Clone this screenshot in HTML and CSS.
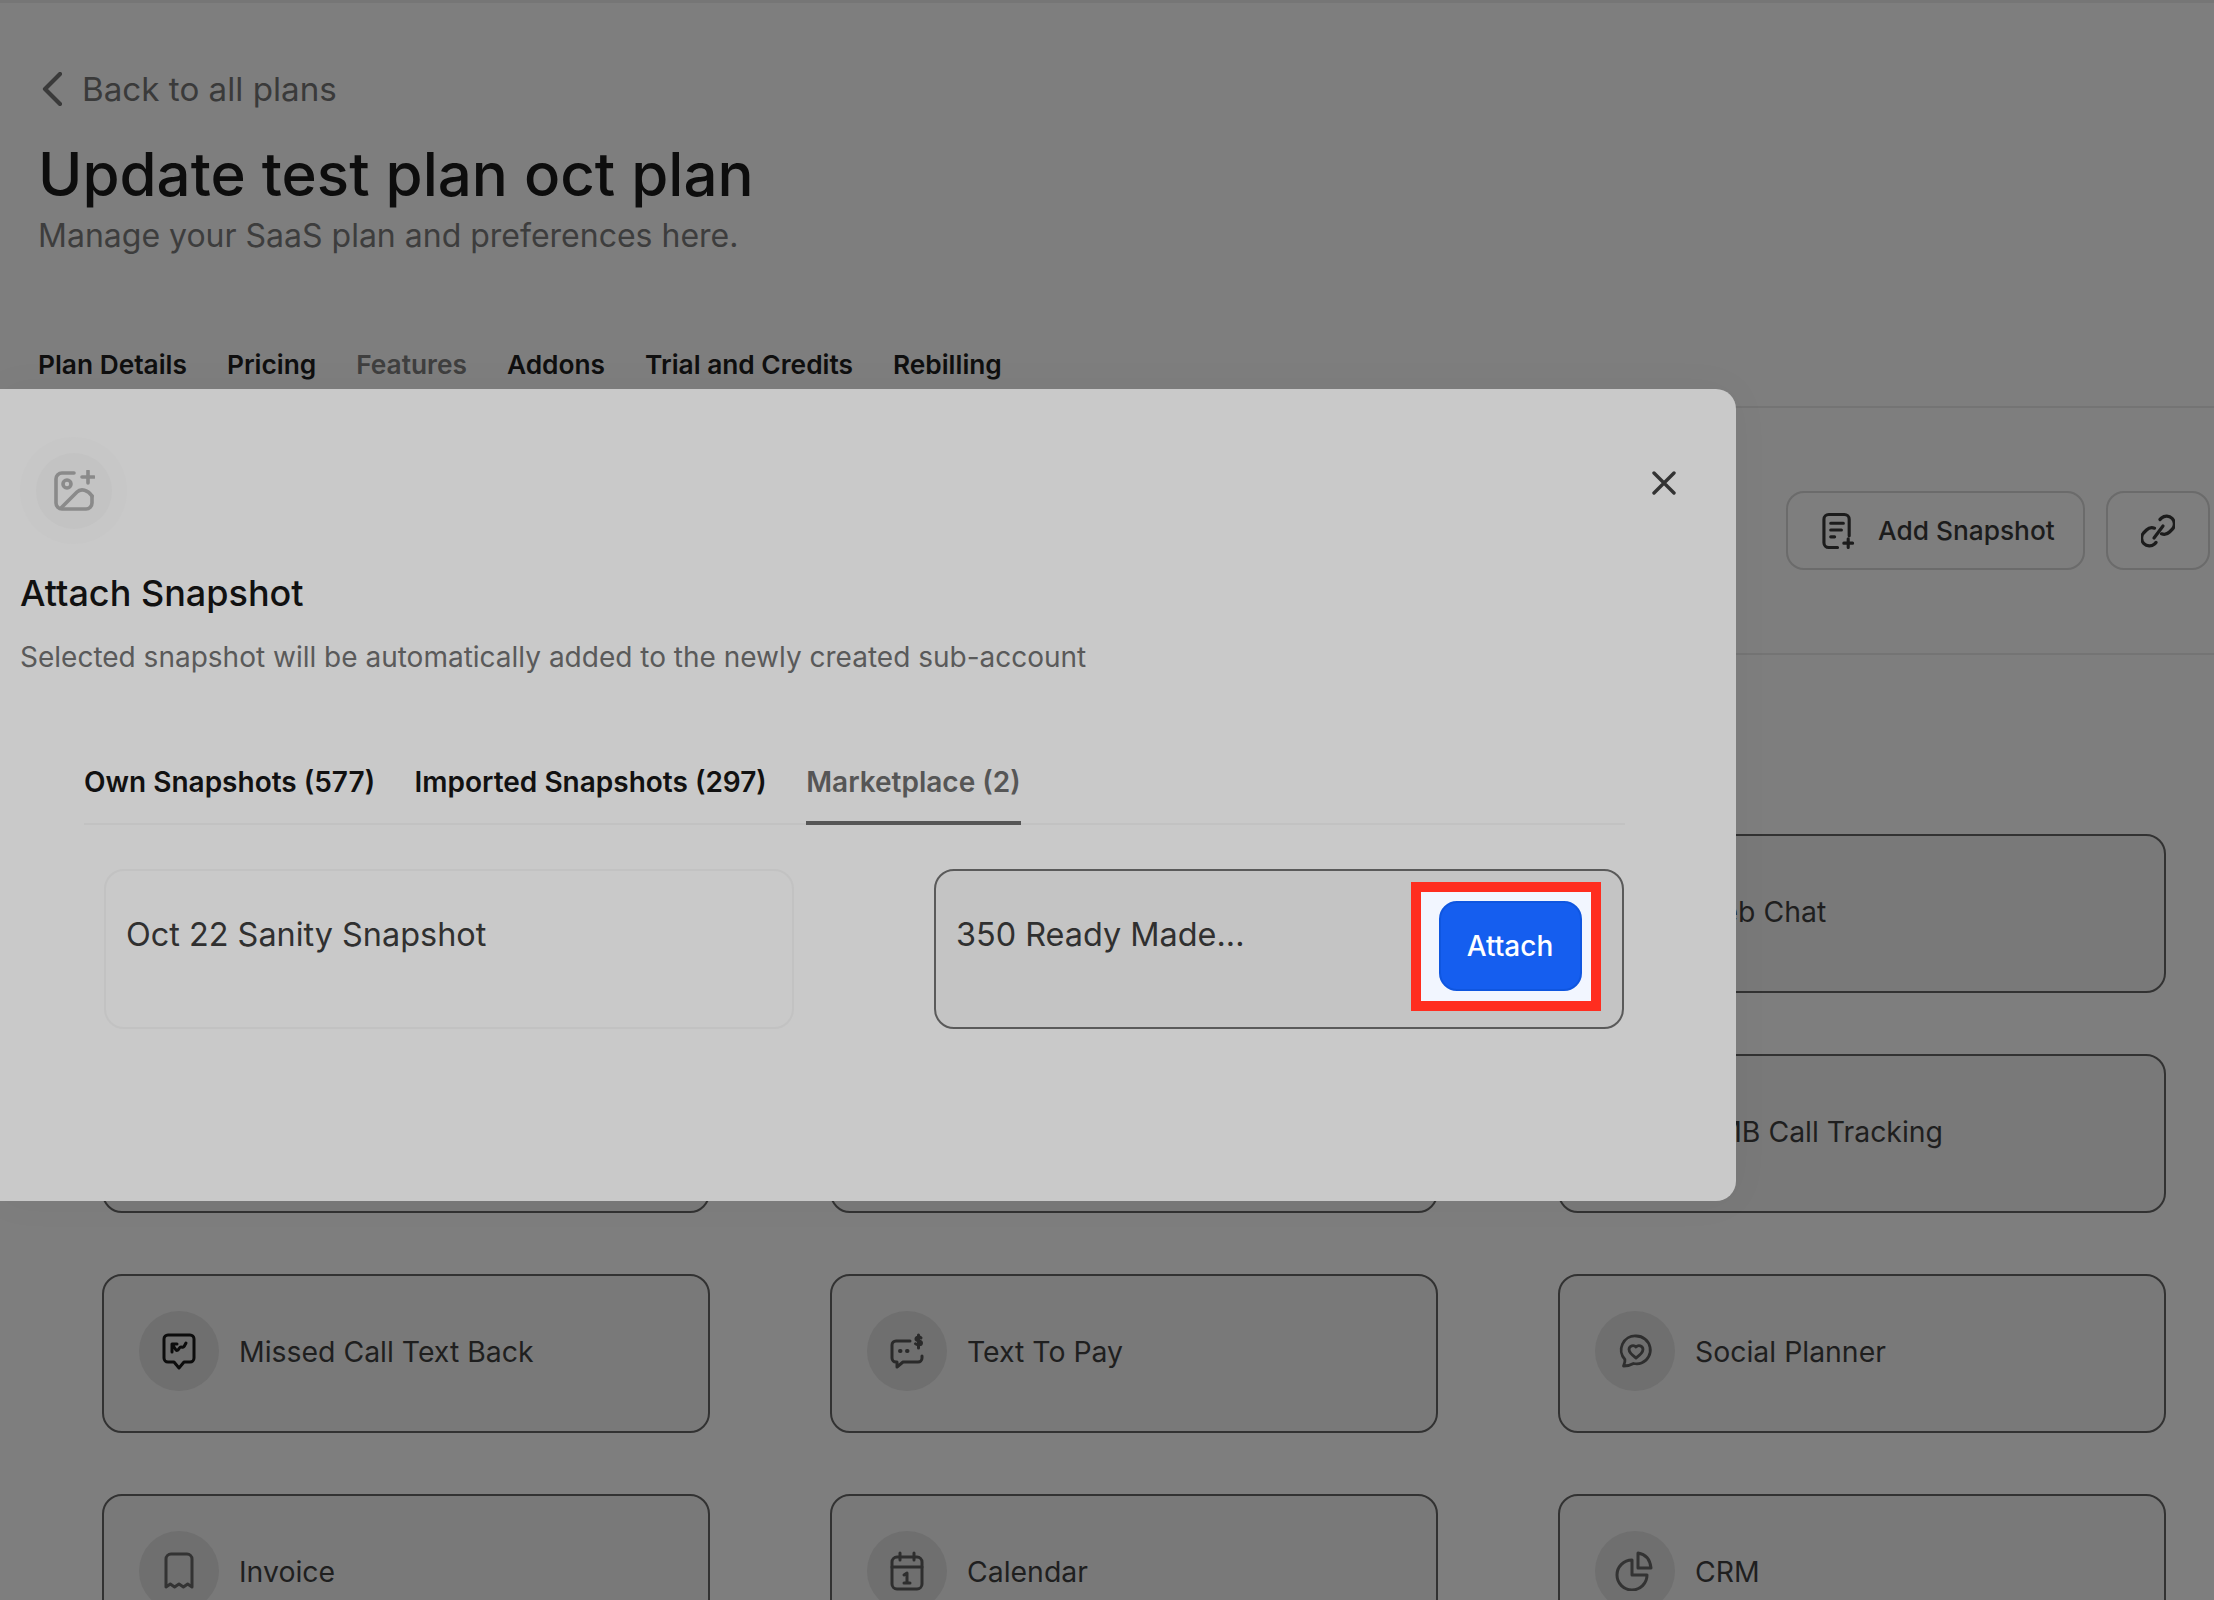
FILE: index.html
```html
<!DOCTYPE html>
<html lang="en">
<head>
<meta charset="utf-8">
<title>Update test plan oct plan</title>
<link rel="stylesheet" href="styles.css">
</head>
<body>
<main class="page">
  <header class="head">
    <a class="back">
      <svg class="back-icon" viewBox="0 0 20 34" fill="none" stroke="currentColor" stroke-width="4.200" stroke-linecap="round" stroke-linejoin="round"><path d="M18 2 3 17l15 15"/></svg>
      <span>Back to all plans</span>
    </a>
    <h1 class="title">Update test plan oct plan</h1>
    <p class="subtitle">Manage your SaaS plan and preferences here.</p>
    <nav class="page-tabs">
      <span class="page-tab">Plan Details</span>
      <span class="page-tab">Pricing</span>
      <span class="page-tab page-tab-active">Features</span>
      <span class="page-tab">Addons</span>
      <span class="page-tab">Trial and Credits</span>
      <span class="page-tab">Rebilling</span>
    </nav>
  </header>

  <section class="toolbar">
    <button class="tool-btn">
      <svg class="tool-icon-doc" viewBox="0 0 34 38" fill="none" stroke="currentColor" stroke-width="3.200" stroke-linecap="round" stroke-linejoin="round"><path d="M16 36H7a5 5 0 0 1-5-5V7a5 5 0 0 1 5-5h16a5 5 0 0 1 5 5v17"/><path d="M9 11h13M9 18h11M9 25h4M27 27v9M22.500 31.500h9"/></svg>
      <span>Add Snapshot</span>
    </button>
    <button class="tool-btn tool-btn-icon">
      <svg class="tool-icon-link" viewBox="0 0 34 34" fill="none" stroke="currentColor" stroke-width="3.200" stroke-linecap="round" stroke-linejoin="round"><path d="M19 5.500l1.500-1.500a7.800 7.800 0 0 1 11 11l-3 3a7.800 7.800 0 0 1-8 1.800"/><path d="M13 24 22 12"/><path d="M15 28.500 13.500 30a7.800 7.800 0 0 1-11-11l3-3a7.800 7.800 0 0 1 8-1.800"/></svg>
    </button>
  </section>

  <section class="grid">
    <div class="card"></div>
    <div class="card"></div>
    <div class="card"><span class="card-icon"></span><span class="card-label">Web Chat</span></div>
    <div class="card"></div>
    <div class="card"></div>
    <div class="card"><span class="card-icon"></span><span class="card-label">GMB Call Tracking</span></div>

    <div class="card">
      <span class="card-icon"><svg viewBox="0 0 40 40" fill="none" stroke="#0c0c0c" stroke-width="3" stroke-linecap="round" stroke-linejoin="round"><path d="M9 4h22a4 4 0 0 1 4 4v19a4 4 0 0 1-4 4h-6l-5 6-5-6H9a4 4 0 0 1-4-4V8a4 4 0 0 1 4-4Z"/><path d="M13 21v-8h5M13 13l4 6c2 2 3-3 5-3s2 2 5-4"/></svg></span>
      <span class="card-label">Missed Call Text Back</span>
    </div>
    <div class="card">
      <span class="card-icon"><svg viewBox="0 0 40 40" fill="none" stroke="#2a2a2a" stroke-width="3" stroke-linecap="round" stroke-linejoin="round"><path d="M23 10H9a4 4 0 0 0-4 4v13a4 4 0 0 0 4 4h1v5l6-5h15a4 4 0 0 0 4-4v-2"/><path d="M13 20h.5M20 20h.5" stroke-width="4"/><path d="M34 7c-1-1.300-5-1.300-5 1 0 2.600 5.500 1.300 5.500 3.900 0 2.400-4.500 2.400-6 .9M31.500 4v13"/></svg></span>
      <span class="card-label">Text To Pay</span>
    </div>
    <div class="card">
      <span class="card-icon"><svg viewBox="0 0 40 40" fill="none" stroke="#2e2e2e" stroke-width="2.800" stroke-linecap="round" stroke-linejoin="round"><path d="M21 5a14 14 0 0 1 5.500 27c-2.500 1-5.500 1-8 .5-2.500 1.500-6 2.500-10 2.500 1-2.200 1.800-4.500 1.400-6.500A14 14 0 0 1 21 5Z"/><path d="M21 27c-3.500-2.500-7-5.200-7-8.700a4 4 0 0 1 7-2.300 4 4 0 0 1 7 2.300c0 3.500-3.500 6.200-7 8.700Z"/></svg></span>
      <span class="card-label">Social Planner</span>
    </div>

    <div class="card">
      <span class="card-icon"><svg viewBox="0 0 40 40" fill="none" stroke="#333" stroke-width="3" stroke-linecap="round" stroke-linejoin="round"><path d="M7 36V8a5 5 0 0 1 5-5h16a5 5 0 0 1 5 5v28l-4.300-3-4.300 3-4.400-3-4.400 3-4.300-3Z"/></svg></span>
      <span class="card-label">Invoice</span>
    </div>
    <div class="card">
      <span class="card-icon"><svg viewBox="0 0 40 40" fill="none" stroke="#2e2e2e" stroke-width="3" stroke-linecap="round" stroke-linejoin="round"><rect x="5" y="6" width="30" height="32" rx="5"/><path d="M5 16h30M13 2v7M27 2v7M17 24l3-2v10M17 32h6"/></svg></span>
      <span class="card-label">Calendar</span>
    </div>
    <div class="card">
      <span class="card-icon"><svg viewBox="0 0 40 40" fill="none" stroke="#333" stroke-width="3" stroke-linecap="round" stroke-linejoin="round"><path d="M17 9a15 15 0 1 0 15 15H17V9Z"/><path d="M23 2c7 1 12 6 13 15H23V2Z"/></svg></span>
      <span class="card-label">CRM</span>
    </div>
  </section>

  <section class="modal">
    <div class="modal-head">
      <span class="ring"><span class="ring-inner">
        <svg class="ring-icon" viewBox="0 0 42 42" fill="none" stroke="#8a8a8a" stroke-width="3.600" stroke-linecap="round" stroke-linejoin="round"><path d="M21 3H9a6 6 0 0 0-6 6v24a6 6 0 0 0 6 6h24a6 6 0 0 0 6-6V26"/><circle cx="14" cy="14" r="4"/><path d="M8 38 24 22c4-4 11-2 15 4"/><path d="M35 1v12M29 7h12"/></svg>
      </span></span>
      <button class="close" aria-label="Close">
        <svg viewBox="0 0 24 24" fill="none" stroke="#333" stroke-width="3.400" stroke-linecap="round"><path d="M2 2l20 20M22 2 2 22"/></svg>
      </button>
    </div>
    <h2 class="modal-title">Attach Snapshot</h2>
    <p class="modal-sub">Selected snapshot will be automatically added to the newly created sub-account</p>

    <div class="modal-tabs">
      <span class="modal-tab">Own Snapshots (577)</span>
      <span class="modal-tab">Imported Snapshots (297)</span>
      <span class="modal-tab modal-tab-active">Marketplace (2)</span>
    </div>

    <div class="snapshots">
      <div class="snapshot"><span class="snapshot-name">Oct 22 Sanity Snapshot</span></div>
      <div class="snapshot snapshot-hover">
        <span class="snapshot-name">350 Ready Made...</span>
        <div class="highlight"><button class="attach">Attach</button></div>
      </div>
    </div>
  </section>
</main>
</body>
</html>
```
FILE: styles.css
```css
* { box-sizing: border-box; }

html, body { margin: 0; height: 100%; }

body {
  overflow: hidden;
  background: #7e7e7e;
  font-family: Inter, "Liberation Sans", sans-serif;
  color: #1d1d1d;
}

.page {
  position: relative;
  width: 2214px;
  height: 1600px;
  overflow: hidden;
  border-top: 3px solid #767676;
}

.head {
  padding: 68px 0 0 38px;
  height: 405px;
  border-bottom: 2px solid #747474;
}

.back {
  display: flex;
  align-items: center;
  gap: 20px;
  margin-left: 4px;
  height: 36px;
  font-size: 33.200px;
  color: #3a3a3a;
}

.back-icon { width: 20px; height: 34px; }

.title {
  margin: 31px 0 0;
  font-size: 60px;
  line-height: 72px;
  font-weight: 500;
  color: #0d0d0d;
}

.subtitle {
  margin: 6px 0 0;
  font-size: 32px;
  line-height: 40px;
  color: #3d3d3d;
}

.page-tabs {
  display: flex;
  gap: 40px;
  margin-top: 91px;
  line-height: 36px;
  font-size: 26.300px;
  font-weight: 600;
  color: #0f0f0f;
}

.page-tab-active { color: #3f3f3f; }

.toolbar {
  display: flex;
  justify-content: flex-end;
  align-items: center;
  gap: 21px;
  height: 247px;
  padding: 0 4px 0 0;
  border-bottom: 2px solid #747474;
}

.tool-btn {
  display: flex;
  align-items: center;
  gap: 23px;
  height: 79px;
  width: 299px;
  padding: 0 0 0 34px;
  border: 2px solid #6b6b6b;
  border-radius: 18px;
  background: transparent;
  font: 500 26.300px Inter, "Liberation Sans", sans-serif;
  color: #1c1c1c;
}

.tool-btn-icon {
  width: 104px;
  padding: 0;
  justify-content: center;
}

.tool-icon-doc { width: 33px; height: 38px; }
.tool-icon-link { width: 34px; height: 34px; }

.grid {
  display: grid;
  grid-template-columns: repeat(3, 607.500px);
  grid-auto-rows: 159px;
  column-gap: 120.500px;
  row-gap: 61px;
  padding: 179px 0 0 102px;
}

.card {
  display: flex;
  align-items: flex-start;
  gap: 20px;
  padding: 35px;
  background: #797979;
  border: 2px solid #323232;
  border-radius: 20px;
}

.card-icon {
  display: flex;
  align-items: center;
  justify-content: center;
  flex: none;
  width: 80px;
  height: 80px;
  border-radius: 50%;
  background: #6f6f6f;
}

.card-icon svg { width: 40px; height: 40px; }

.card-label {
  font-size: 28.400px;
  line-height: 82px;
  color: #1f1f1f;
}

.modal {
  position: absolute;
  left: 0;
  top: 386px;
  width: 1736px;
  height: 812px;
  padding: 0 0 0 20px;
  background: #c9c9c9;
  border-radius: 0 20px 20px 0;
  box-shadow: 0 0 40px rgba(0, 0, 0, .04);
}

.modal-head {
  display: flex;
  justify-content: space-between;
  align-items: flex-start;
  padding: 48px 60px 0 0;
  height: 182px;
}

.ring {
  display: flex;
  align-items: center;
  justify-content: center;
  width: 107px;
  height: 107px;
  border-radius: 50%;
  background: #c7c7c7;
}

.ring-inner {
  display: flex;
  align-items: center;
  justify-content: center;
  width: 76px;
  height: 76px;
  border-radius: 50%;
  background: #c3c3c3;
}

.ring-icon { width: 42px; height: 42px; }

.close {
  width: 24px;
  height: 24px;
  margin-top: 34px;
  padding: 0;
  border: 0;
  background: none;
}

.close svg { display: block; width: 24px; height: 24px; }

.modal-title {
  margin: 0;
  font-size: 36px;
  line-height: 44px;
  font-weight: 500;
  color: #111;
}

.modal-sub {
  margin: 23px 0 0;
  font-size: 28px;
  line-height: 38px;
  color: #5a5a5a;
}

.modal-tabs {
  display: flex;
  gap: 39.500px;
  margin: 88px 111px 0 64px;
  height: 61px;
  border-bottom: 2px solid #c2c2c2;
  font-size: 28px;
  line-height: 36px;
  font-weight: 600;
  color: #111;
}

.modal-tab { height: 61px; }

.modal-tab-active {
  color: #565656;
  border-bottom: 4px solid #565656;
}

.snapshots {
  display: grid;
  grid-template-columns: 689.500px 689.500px;
  column-gap: 140.500px;
  margin: 44px 0 0 84px;
}

.snapshot {
  position: relative;
  height: 160px;
  padding: 44px 20px;
  border: 2px solid #c2c2c2;
  border-radius: 20px;
}

.snapshot-hover {
  background: #c4c4c4;
  border-color: #5a5a5a;
}

.snapshot-name {
  font-size: 32.400px;
  line-height: 40px;
  color: #303030;
}

.highlight {
  position: absolute;
  right: 21px;
  top: 11px;
  width: 190px;
  height: 129px;
  padding: 9px 9px 10px 18px;
  background: #f2f6ff;
  border: 10px solid #ff2d1f;
}

.attach {
  width: 143px;
  height: 90px;
  padding: 0;
  border: 2px solid #0f56e0;
  border-radius: 18px;
  background: #155eef;
  color: #fff;
  font: 500 28px Inter, "Liberation Sans", sans-serif;
}
```
